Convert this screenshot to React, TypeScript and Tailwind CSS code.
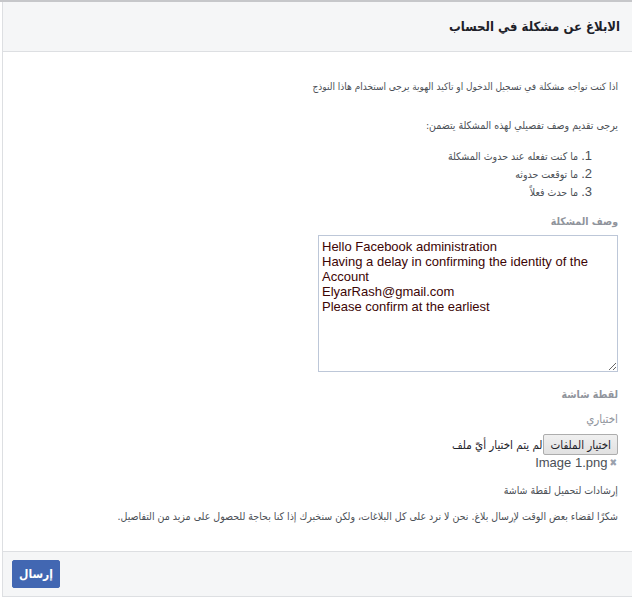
export default function App() {
  const steps = [
    "ما كنت تفعله عند حدوث المشكلة",
    "ما توقعت حدوثه",
    "ما حدث فعلاً",
  ]

  return (
    <div className="w-[632px] h-[597px] bg-white border-t-2 border-[#c6c7ca] overflow-hidden font-['DejaVu_Sans_Condensed','DejaVu_Sans',sans-serif]">
      <div dir="rtl" className="ml-[2px] h-full border-l border-[#dddfe2] flex flex-col">
        {/* Header */}
        <div className="h-[50px] shrink-0 bg-[#f5f6f7] border-b border-[#dddfe2] flex items-center pr-[12px]">
          <h1 className="text-[13px] font-bold text-[#1d2129]">الابلاغ عن مشكلة في الحساب</h1>
        </div>

        {/* Body */}
        <div className="flex-1 pt-[27px] pr-[14px] text-[10.5px] leading-[16px] text-[#4b4f56]">
          <p className="text-[10px]">اذا كنت تواجه مشكلة في تسجيل الدخول او تاكيد الهوية يرجى استخدام هاذا النوذج</p>
          <p className="mt-[22px]">يرجى تقديم وصف تفصيلي لهذه المشكلة يتضمن:</p>

          <ol className="mt-[14px] pr-[26px]">
            {steps.map((step, i) => (
              <li key={step} className="leading-[17px]">
                <span className="text-[13px] font-['Liberation_Sans',sans-serif]">{i + 1}.</span> {step}
              </li>
            ))}
          </ol>

          <div className="mt-[12px] font-bold text-[#90949c]">وصف المشكلة</div>
          <textarea
            dir="ltr"
            readOnly
            className="mt-[6px] block w-[300px] h-[137px] border border-[#bdc7d8] px-[3px] py-[3px] text-[13px] leading-[15px] text-[#3d0505] font-['Liberation_Sans',sans-serif] outline-none resize"
            defaultValue={
              "Hello Facebook administration\nHaving a delay in confirming the identity of the Account\nElyarRash@gmail.com\nPlease confirm at the earliest"
            }
          />

          <div className="mt-[14px] font-bold text-[#90949c]">لقطة شاشة</div>
          <div className="mt-[9px] text-[11.5px] text-[#90949c]">اختياري</div>

          <div className="mt-[7px] flex items-center h-[21px]">
            <button className="h-[21px] px-[6px] border border-[#adadad] rounded-[2px] bg-gradient-to-b from-[#f0f0f0] to-[#e1e1e1] text-[11.5px] text-[#1d2129]">
              اختيار الملفات
            </button>
            <span className="mr-[1px] text-[11.5px] text-[#1d2129]">لم يتم اختيار أيّ ملف</span>
          </div>

          <div dir="ltr" className="flex justify-end items-center h-[16px] pr-[1px]">
            <span className="text-[13px] text-[#4b4f56] font-['Liberation_Sans',sans-serif]">Image 1.png</span>
            <span className="ml-[2px] text-[10px] text-[#9aa1ad]">✖</span>
          </div>

          <div className="mt-[11px] text-[#4b4f56]">إرشادات لتحميل لقطة شاشة</div>
          <p className="mt-[10px]">
            شكرًا لقضاء بعض الوقت لإرسال بلاغ. نحن لا نرد على كل البلاغات، ولكن سنخبرك إذا كنا بحاجة للحصول على مزيد من التفاصيل.
          </p>
        </div>

        {/* Footer */}
        <div className="h-[46px] shrink-0 bg-[#f5f6f7] border-t border-b border-[#dddfe2] flex items-center justify-end pl-[9px]">
          <button className="w-[48px] h-[28px] rounded-[2px] bg-[#4267b2] border border-[#4267b2] text-white text-[12px] font-bold">
            إرسال
          </button>
        </div>
      </div>
    </div>
  )
}
